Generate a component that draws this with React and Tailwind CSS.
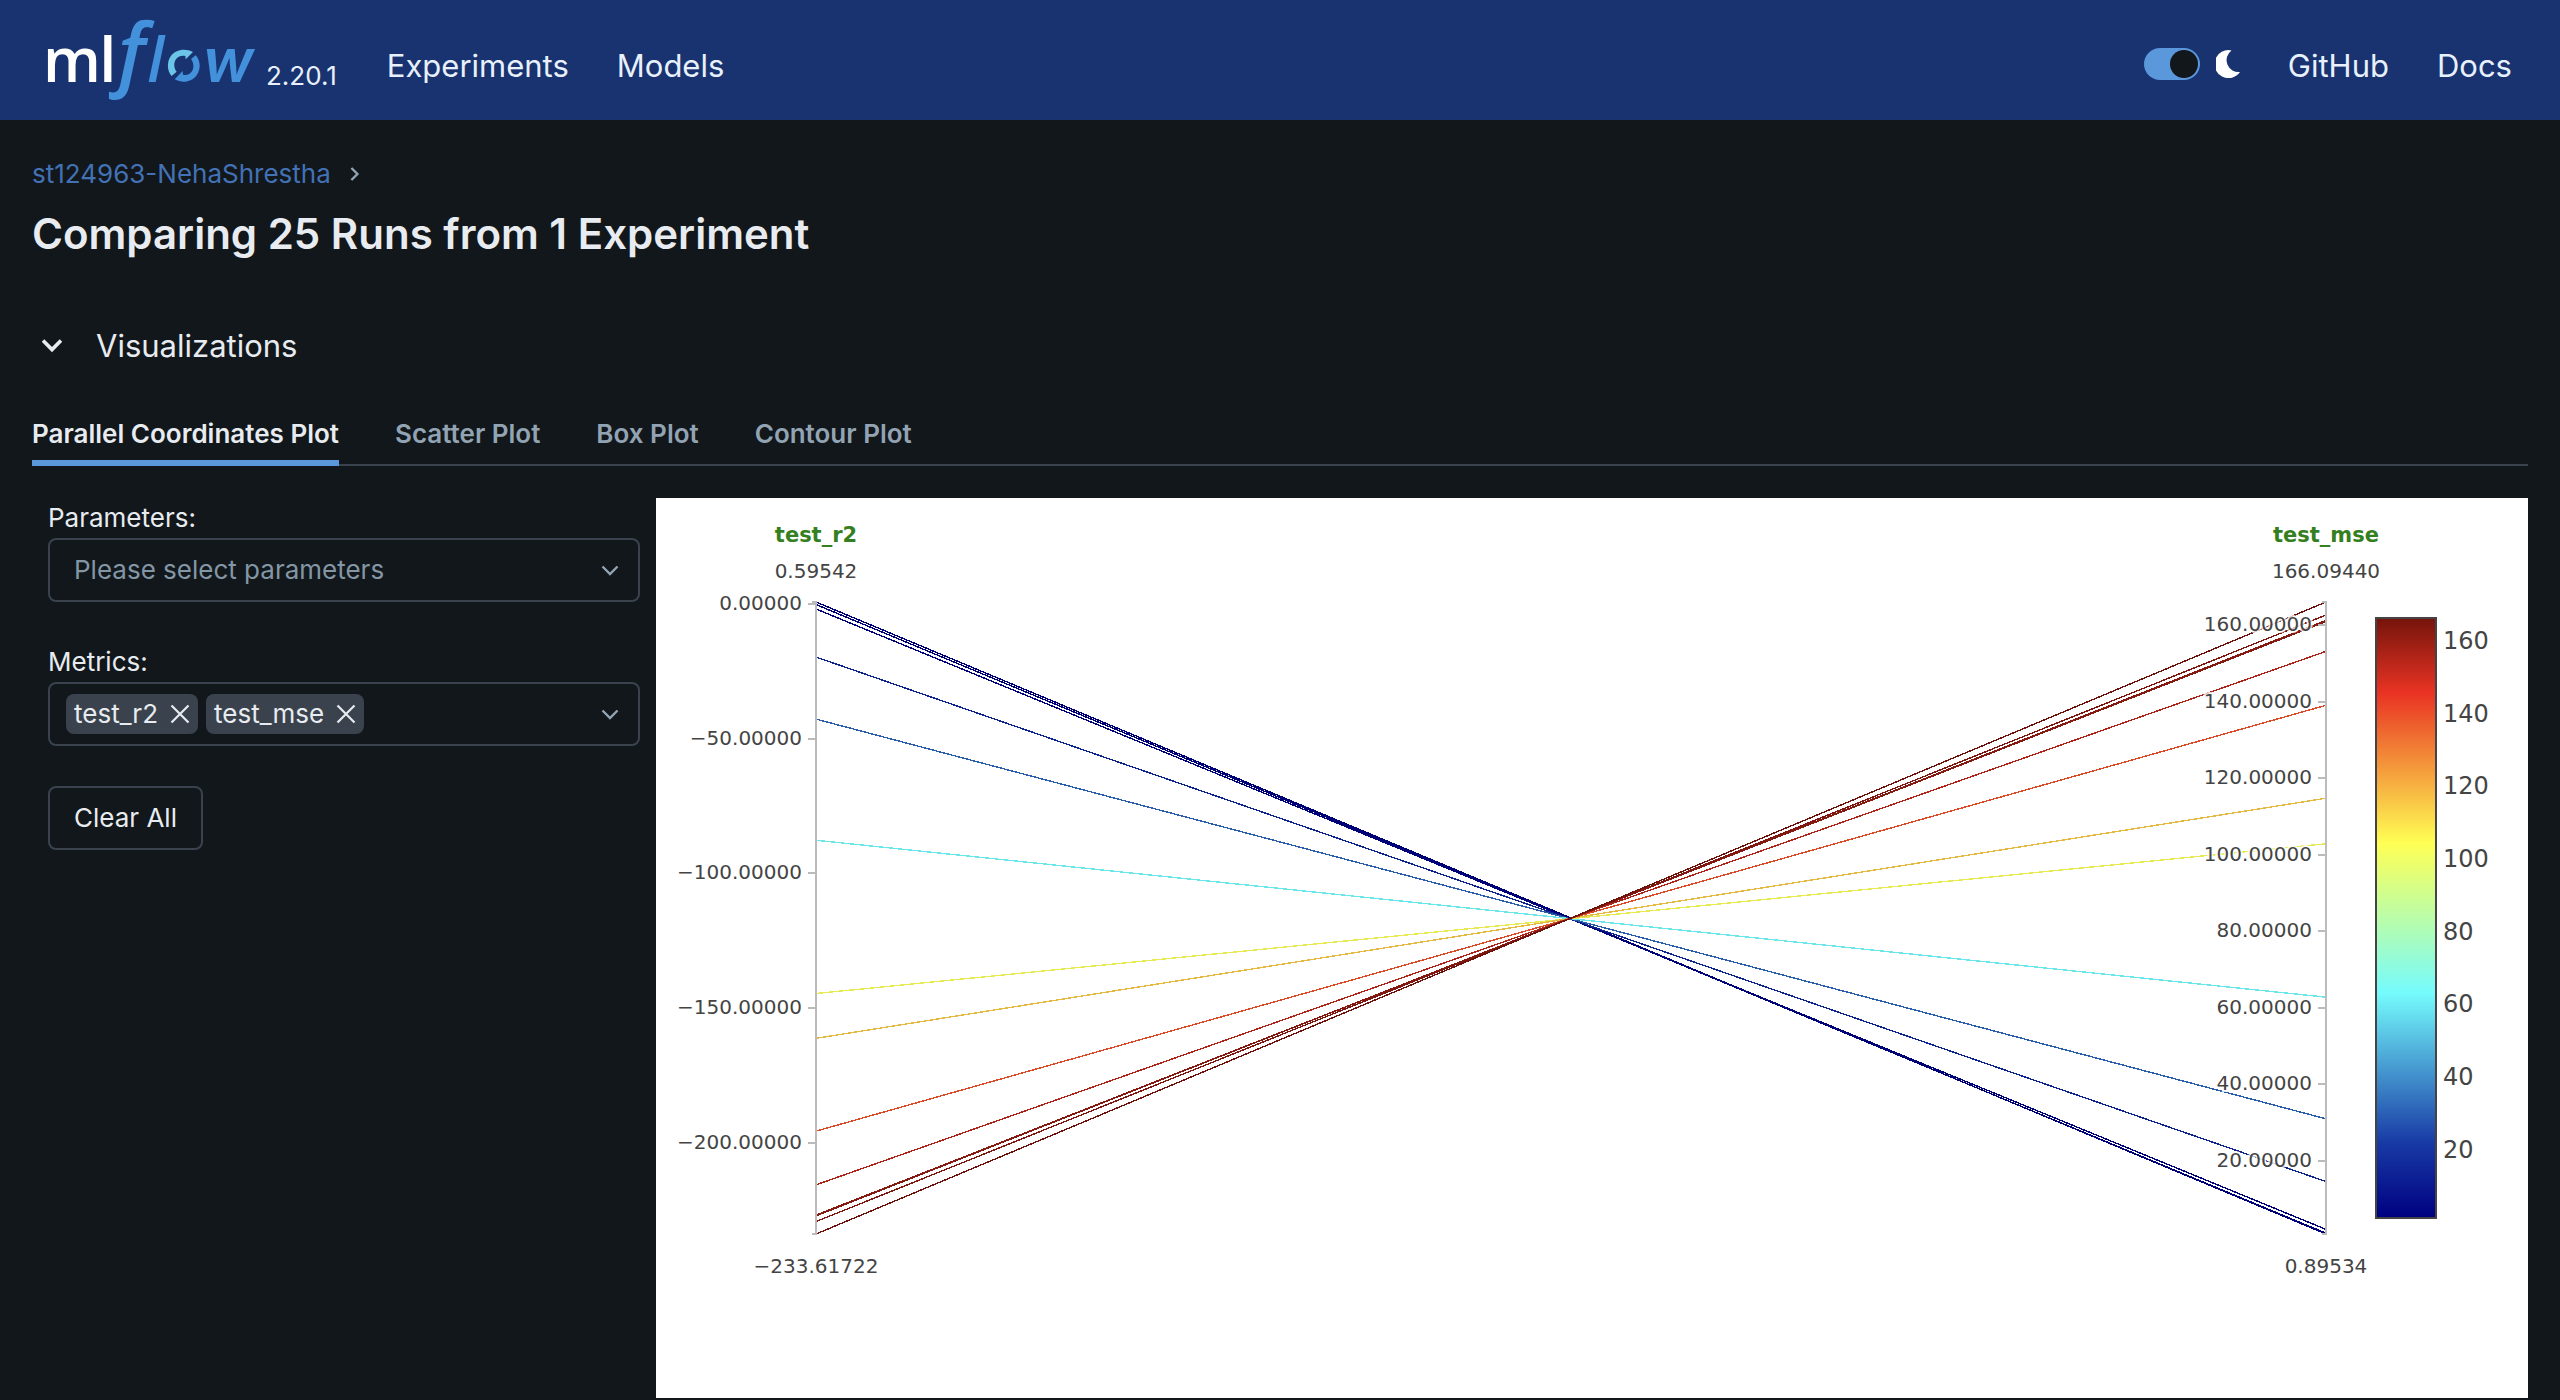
import React from "react";

const AXIS_TOP = 104;
const AXIS_HEIGHT = 632;
const LEFT_X = 160;
const RIGHT_X = 1670;

const JET = [
  [0, [0, 0, 128]],
  [0.125, [24, 58, 165]],
  [0.375, [117, 251, 253]],
  [0.625, [255, 255, 84]],
  [0.875, [233, 51, 35]],
  [1, [117, 20, 12]],
];

// Run lines are drawn slightly darker than the colour bar so they stay legible on white.
const LINE_SHADE = 0.92;

function lineColor(t) {
  for (let i = 1; i < JET.length; i++) {
    const [p1, c1] = JET[i];
    const [p0, c0] = JET[i - 1];
    if (t <= p1) {
      const k = (t - p0) / (p1 - p0);
      return `rgb(${c0.map((v, j) => Math.round((v + (c1[j] - v) * k) * LINE_SHADE)).join(",")})`;
    }
  }
  return "rgb(108,18,11)";
}

const R2 = { min: -233.61722, max: 0.59542 };
const MSE = { min: 0.89534, max: 166.0944 };
const yOf = (axis, v) => AXIS_TOP + ((axis.max - v) / (axis.max - axis.min)) * AXIS_HEIGHT;

const RUNS = [
  [0.59542, 0.89534],
  [-0.35, 1.1],
  [-2, 2.1],
  [-19.8, 14.6],
  [-42.8, 31],
  [-87.7, 62.8],
  [-144.5, 102.9],
  [-161.1, 114.8],
  [-195.5, 139.1],
  [-215.4, 153.2],
  [-226.6, 161],
  [-226.9, 161.3],
  [-229, 162.7],
  [-233.61722, 166.0944],
];

const R2_TICKS = [
  [0, "0.00000"],
  [-50, "−50.00000"],
  [-100, "−100.00000"],
  [-150, "−150.00000"],
  [-200, "−200.00000"],
];
const MSE_TICKS = [160, 140, 120, 100, 80, 60, 40, 20];

function Logo() {
  return (
    <svg viewBox="54 30 624 240" className="h-20 w-52 shrink-0 overflow-visible" role="img" aria-label="mlflow">
      <g fontFamily="'Open Sans', sans-serif" fontWeight="600">
        <text x="39" y="216" fontSize="182" fill="#fff">m</text>
        <text x="208" y="216" fontSize="184" fill="#fff">l</text>
        <g fontStyle="italic" fill="#4390db">
          <text x="263" y="213" fontSize="240">f</text>
          <text x="352" y="216" fontSize="184">l</text>
          <text x="518" y="216" fontSize="182" fontFamily="Inter, sans-serif">w</text>
        </g>
      </g>
      <path
        d="M425 198 C411 184 410 156 422 139 C436 118 466 114 489 126 L467 148 L466 138 C446 133 431 149 433 168 C434 175 436 181 440 185 Z"
        fill="#6cc5e9"
      />
      <path
        d="M497 136 C511 151 514 176 500 196 C485 217 457 221 434 208 L458 183 L459 194 C478 198 492 184 490 165 C489 158 487 152 483 147 Z"
        fill="#4390db"
      />
    </svg>
  );
}

function Chevron({ className, width = 2.4 }) {
  return (
    <svg viewBox="0 0 20 20" className={className} fill="none" stroke="currentColor" strokeWidth={width} aria-hidden="true">
      <path d="M2.5 5.5 10 13l7.5-7.5" />
    </svg>
  );
}

function Header() {
  return (
    <header className="flex h-[120px] items-center justify-between bg-[#183370] px-12 text-[#e8f1fb]">
      <div className="flex items-center">
        <a href="#home" className="flex items-end">
          <Logo />
          <span className="mb-2 ml-2.5 text-[26px] leading-8">2.20.1</span>
        </a>
        <nav className="ml-[50px] flex gap-12 pt-3 text-[31px] leading-10">
          <a href="#experiments">Experiments</a>
          <a href="#models">Models</a>
        </nav>
      </div>
      <div className="flex items-center gap-12 pt-2 text-[31px] leading-10">
        <label className="flex items-center gap-4">
          <input
            type="checkbox"
            role="switch"
            defaultChecked
            aria-label="Dark mode"
            className="flex h-8 w-14 appearance-none items-center justify-end rounded-full bg-[#5b97db] p-0.5 before:size-7 before:rounded-full before:bg-[#12171b]"
          />
          <svg viewBox="0 0 24 28" className="h-7 w-6" fill="#fff" aria-hidden="true">
            <path d="M15.5 0.4 A14 14 0 1 0 24 22 A12 12 0 0 1 15.5 0.4 Z" />
          </svg>
        </label>
        <a href="#github" className="pt-1">GitHub</a>
        <a href="#docs" className="pt-1">Docs</a>
      </div>
    </header>
  );
}

function Tag({ name }) {
  return (
    <span className="flex h-10 items-center gap-3 rounded-lg bg-[#3a434d] px-2">
      {name}
      <button type="button" aria-label={`Remove ${name}`}>
        <svg viewBox="0 0 20 20" className="size-5" fill="none" stroke="currentColor" strokeWidth="2.2" aria-hidden="true">
          <path d="M1.5 1.5l17 17M18.5 1.5l-17 17" />
        </svg>
      </button>
    </span>
  );
}

function Controls() {
  return (
    <form className="flex w-1/4 flex-col items-start px-4 text-[26px] leading-10">
      <label htmlFor="parameters">Parameters:</label>
      <div className="relative w-full">
        <select
          id="parameters"
          defaultValue=""
          className="h-16 w-full appearance-none rounded-lg border-2 border-[#3a434d] bg-transparent px-6 text-[#8396a5]"
        >
          <option value="">Please select parameters</option>
        </select>
        <Chevron className="pointer-events-none absolute top-[23px] right-5 size-5 text-[#92a4b3]" />
      </div>
      <label htmlFor="metrics" className="mt-10">Metrics:</label>
      <div className="relative flex h-16 w-full items-center gap-2 rounded-lg border-2 border-[#3a434d] px-4">
        <Tag name="test_r2" />
        <Tag name="test_mse" />
        <select id="metrics" className="h-10 min-w-0 flex-1 appearance-none bg-transparent">
          <option value="" />
        </select>
        <Chevron className="pointer-events-none absolute top-[21px] right-[18px] size-5 text-[#92a4b3]" />
      </div>
      <button type="button" className="mt-10 h-16 rounded-lg border-2 border-[#3a434d] px-6">
        Clear All
      </button>
    </form>
  );
}

function Plot() {
  const halo = { paintOrder: "stroke", stroke: "#fff", strokeOpacity: 0.8, strokeWidth: 4 };
  return (
    <svg viewBox="0 0 1872 900" className="block h-auto w-full bg-white" role="img" aria-label="Parallel coordinates plot">
      <defs>
        <linearGradient id="jet" x1="0" y1="1" x2="0" y2="0">
          {JET.map(([p, c]) => (
            <stop key={p} offset={p} stopColor={`rgb(${c.join(",")})`} />
          ))}
        </linearGradient>
      </defs>
      <g strokeWidth="1.4" shapeRendering="crispEdges">
        {RUNS.map(([r2, mse]) => (
          <line
            key={r2}
            x1={LEFT_X}
            y1={yOf(R2, r2)}
            x2={RIGHT_X}
            y2={yOf(MSE, mse)}
            stroke={lineColor((mse - MSE.min) / (MSE.max - MSE.min))}
          />
        ))}
      </g>
      <g stroke="#bbb" strokeWidth="2" fill="none">
        <path d={`M${LEFT_X - 4} ${AXIS_TOP}H${LEFT_X}V${AXIS_TOP + AXIS_HEIGHT}H${LEFT_X - 4}`} />
        <path d={`M${RIGHT_X - 4} ${AXIS_TOP}H${RIGHT_X}V${AXIS_TOP + AXIS_HEIGHT}H${RIGHT_X - 4}`} />
        {R2_TICKS.map(([v]) => (
          <path key={v} d={`M${LEFT_X - 8} ${Math.round(yOf(R2, v))}H${LEFT_X}`} />
        ))}
        {MSE_TICKS.map((v) => (
          <path key={v} d={`M${RIGHT_X - 8} ${Math.round(yOf(MSE, v))}H${RIGHT_X}`} />
        ))}
      </g>
      <g fontFamily="'DejaVu Sans', sans-serif" fontSize="20" fill="#444">
        <g textAnchor="end" style={halo}>
          {R2_TICKS.map(([v, text]) => (
            <text key={v} x={LEFT_X - 14} y={Math.round(yOf(R2, v)) + 6}>{text}</text>
          ))}
          {MSE_TICKS.map((v) => (
            <text key={v} x={RIGHT_X - 14} y={Math.round(yOf(MSE, v)) + 6}>{v.toFixed(5)}</text>
          ))}
        </g>
        <g textAnchor="middle">
          <g fontSize="21" fontWeight="700" fill="#347f20">
            <text x={LEFT_X} y="44">test_r2</text>
            <text x={RIGHT_X} y="44">test_mse</text>
          </g>
          <text x={LEFT_X} y="80">0.59542</text>
          <text x={RIGHT_X} y="80">166.09440</text>
          <text x={LEFT_X} y="775">−233.61722</text>
          <text x={RIGHT_X} y="775">0.89534</text>
        </g>
        <g fontSize="24">
          {MSE_TICKS.map((v) => (
            <text key={v} x="1787" y={Math.round(120 + ((MSE.max - v) / (MSE.max - MSE.min)) * 600) + 9}>{v}</text>
          ))}
        </g>
      </g>
      <rect x="1720" y="120" width="60" height="600" fill="url(#jet)" stroke="#444" strokeWidth="2" />
    </svg>
  );
}

const TABS = ["Parallel Coordinates Plot", "Scatter Plot", "Box Plot", "Contour Plot"];

export default function App() {
  return (
    <div className="min-h-screen bg-[#12171b] font-['Inter',sans-serif] text-[#e8ecf0]">
      <Header />
      <main className="px-8 pt-[34px]">
        <div className="flex items-center gap-4 text-[26px] leading-10">
          <a href="#experiment" className="text-[#4272b5]">st124963-NehaShrestha</a>
          <Chevron className="size-4 -rotate-90 text-[#92a4b3]" width={3} />
        </div>
        <h1 className="mt-3 text-[42px] leading-14 font-semibold">Comparing 25 Runs from 1 Experiment</h1>
        <button type="button" aria-expanded="true" className="mt-15 flex items-center gap-8 pl-2 text-[31px] leading-12">
          <Chevron className="size-6" width={3} />
          Visualizations
        </button>
        <div role="tablist" className="mt-11 flex gap-14 text-[26px] leading-10 font-semibold shadow-[inset_0_-2px_0_#3a434d]">
          {TABS.map((tab, i) => (
            <button
              key={tab}
              type="button"
              role="tab"
              aria-selected={i === 0}
              className={
                i === 0
                  ? "border-b-6 border-[#5b97db] pb-1.5"
                  : "border-b-6 border-transparent pb-1.5 text-[#92a4b3]"
              }
            >
              {tab}
            </button>
          ))}
        </div>
        <div className="mt-8 flex">
          <Controls />
          <div className="w-3/4">
            <Plot />
          </div>
        </div>
      </main>
    </div>
  );
}
